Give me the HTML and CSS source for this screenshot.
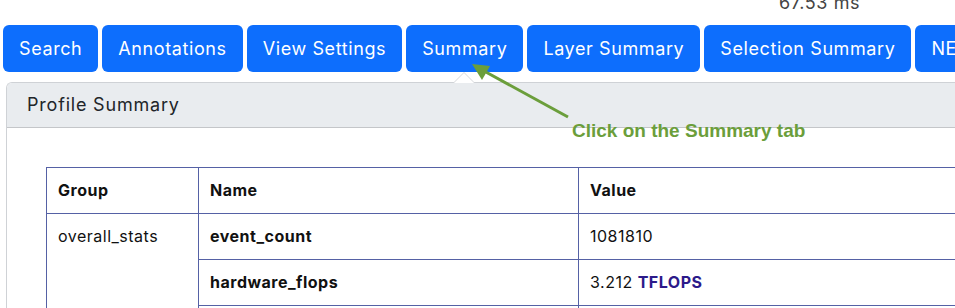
FILE: index.html
```html
<!DOCTYPE html>
<html>
<head>
<meta charset="utf-8">
<link rel="stylesheet" href="styles.css">
</head>
<body>
<div class="topline"><span class="timing">67.53 ms</span></div>
<nav class="tabs">
  <button class="tab">Search</button>
  <button class="tab">Annotations</button>
  <button class="tab">View Settings</button>
  <button class="tab tab-active">Summary</button>
  <button class="tab">Layer Summary</button>
  <button class="tab">Selection Summary</button>
  <button class="tab">NEFF Nodes</button>
</nav>
<section class="card">
  <span class="caret"></span>
  <header class="card-header">Profile Summary</header>
  <div class="card-body">
    <table class="summary">
      <colgroup><col class="c1"><col class="c2"><col class="c3"></colgroup>
      <thead>
        <tr><th>Group</th><th>Name</th><th>Value</th></tr>
      </thead>
      <tbody>
        <tr><td rowspan="3">overall_stats</td><td class="name">event_count</td><td>1081810</td></tr>
        <tr><td class="name">hardware_flops</td><td>3.212 <span class="unit">TFLOPS</span></td></tr>
        <tr><td class="name">&nbsp;</td><td>&nbsp;</td></tr>
      </tbody>
    </table>
  </div>
</section>
<div class="annotation">
  <svg class="arrow" width="110" height="70" viewBox="0 0 110 70">
    <line x1="98" y1="56" x2="14" y2="10" stroke="#6b9e3b" stroke-width="3"/>
    <polygon points="2,3 20,5 12,19" fill="#6b9e3b"/>
  </svg>
  <span class="note">Click on the Summary tab</span>
</div>
</body>
</html>
```
FILE: styles.css
```css
html, body {
  margin: 0;
  padding: 0;
  overflow: hidden;
  background: #fff;
  font-family: Inter, "Liberation Sans", sans-serif;
  color: #212529;
}
body {
  position: relative;
  width: 955px;
  height: 308px;
}
.topline {
  height: 25px;
  display: flex;
  padding-left: 779px;
}
.timing {
  font-size: 18px;
  line-height: 22px;
  margin-top: -8px;
  letter-spacing: 0.6px;
  color: #444;
  white-space: nowrap;
}
.tabs {
  display: flex;
  gap: 4px;
  padding-left: 3px;
  white-space: nowrap;
}
.tab {
  flex: none;
  height: 47px;
  padding: 0 16px;
  border: none;
  border-radius: 6px;
  background: #0d6efd;
  color: #fff;
  font-family: Inter, "Liberation Sans", sans-serif;
  font-size: 18px;
  letter-spacing: 0.6px;
}
.card {
  position: relative;
  margin: 10px 0 0 6px;
  border: 1px solid #cfd2d6;
  border-right: none;
  border-top-left-radius: 6px;
}
.caret {
  position: absolute;
  left: 446px;
  top: -11px;
  width: 0;
  height: 0;
  border-left: 11px solid transparent;
  border-right: 11px solid transparent;
  border-bottom: 11px solid #d5d7da;
}
.caret::after {
  content: "";
  position: absolute;
  left: -10px;
  top: 1px;
  border-left: 10px solid transparent;
  border-right: 10px solid transparent;
  border-bottom: 10px solid #fff;
}
.card-header {
  height: 44px;
  line-height: 44px;
  padding-left: 20px;
  background: #e9ecef;
  border-bottom: 1px solid #c4c6c9;
  border-top-left-radius: 5px;
  font-size: 18px;
  letter-spacing: 0.8px;
}
.card-body {
  padding: 39px 0 0 39px;
}
.summary {
  border-collapse: collapse;
  width: 1300px;
  font-size: 16px;
  letter-spacing: 0.5px;
  color: #111;
}
.c1 { width: 152px; }
.c2 { width: 380px; }
.summary th, .summary td {
  border: 1px solid #5561a5;
  padding: 12px 11px;
  line-height: 21px;
  text-align: left;
  vertical-align: top;
}
.summary th { font-weight: 700; }
.name { font-weight: 700; }
.unit { font-weight: 700; color: #2c1a8a; }
.annotation {
  position: absolute;
  left: 470px;
  top: 61px;
}
.arrow {
  display: block;
}
.note {
  position: absolute;
  left: 102px;
  top: 59px;
  white-space: nowrap;
  font-family: "Liberation Sans", Arial, sans-serif;
  font-weight: 700;
  font-size: 19px;
  color: #6b9e3b;
}
```
